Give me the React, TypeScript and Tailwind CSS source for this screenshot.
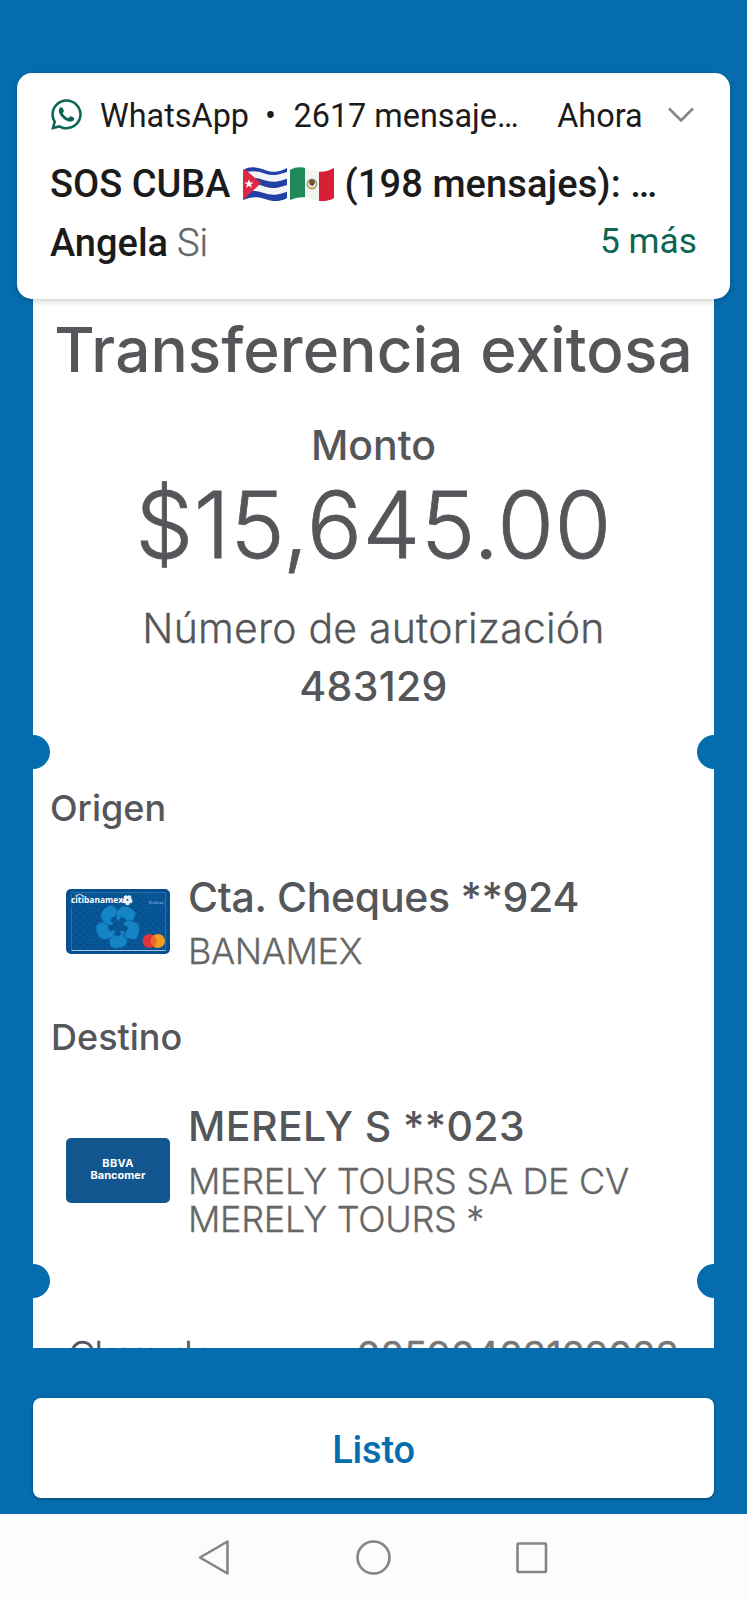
import React from 'react'
import { FaWhatsapp } from 'react-icons/fa'

const CubaFlag = () => (
  <svg width="46" height="34" viewBox="0 0 46 34">
    <clipPath id="cuba">
      <path d="M1 3C8 -1 15 0 23 3S38 5 45 1V31C38 35 31 35 23 32S8 30 1 33Z" />
    </clipPath>
    <g clipPath="url(#cuba)">
      <rect width="46" height="34" fill="#2340a4" />
      <path d="M0 10C8 6 15 7 23 10S38 11 46 8" fill="none" stroke="#f4f4f6" strokeWidth="6.5" />
      <path d="M0 23C8 19 15 20 23 23S38 24 46 21" fill="none" stroke="#f4f4f6" strokeWidth="6.5" />
      <path d="M0 0L19 16L0 34Z" fill="#dc2845" />
      <path d="M7 12L8.2 15.4H11.6L8.9 17.4L10 21L7 18.8L4 21L5.1 17.4L2.4 15.4H5.8Z" fill="#fff" />
    </g>
  </svg>
)

const MexicoFlag = () => (
  <svg width="46" height="34" viewBox="0 0 46 34">
    <clipPath id="mexico">
      <path d="M1 3C8 -1 15 0 23 3S38 5 45 1V31C38 35 31 35 23 32S8 30 1 33Z" />
    </clipPath>
    <g clipPath="url(#mexico)">
      <rect width="46" height="34" fill="#f3f3f1" />
      <rect width="16" height="34" fill="#1f8a58" />
      <rect x="30" width="16" height="34" fill="#d81f35" />
      <circle cx="23" cy="17" r="4.6" fill="none" stroke="#8aa57a" strokeWidth="1.6" />
      <path d="M20 15C21 11 26 12 26 16L24 19L21 18Z" fill="#7a4a24" />
      <path d="M19.5 20Q23 23 26.5 20" fill="none" stroke="#c79a3a" strokeWidth="1.4" />
    </g>
  </svg>
)

const Notification = () => (
  <div className="relative z-10 mx-[17px] flex h-[226px] flex-col rounded-[15px] bg-white px-[33px] text-[#1b1b1b] shadow-[0_2px_6px_rgba(0,0,0,0.2)]">
    <div className="mt-[22px] flex h-10 items-center text-[32.4px] leading-10 whitespace-nowrap">
      <FaWhatsapp className="-mt-px -ml-px h-[35px] w-[35px] text-[#0b6655]" />
      <span className="mt-px ml-[16px]">WhatsApp</span>
      <span className="mt-px ml-[16px]">•</span>
      <span className="mt-px ml-[17.5px]">2617 mensaje…</span>
      <span className="mt-px ml-[38.5px]">Ahora</span>
      <svg className="ml-[25px]" width="26" height="16" viewBox="0 0 26 16" fill="none">
        <path d="M1 1.500L13 13.500L25 1.500" stroke="#858585" strokeWidth="2.600" />
      </svg>
    </div>
    <div className="mt-[25px] flex h-12 items-center text-[38px] leading-12 font-medium whitespace-nowrap">
      <span>SOS CUBA</span>
      <span className="ml-[11px] flex gap-px">
        <CubaFlag />
        <MexicoFlag />
      </span>
      <span className="ml-[10px] tracking-[0.1px]">(198 mensajes): …</span>
    </div>
    <div className="mt-[11px] flex h-12 items-center justify-between text-[38px] leading-12">
      <div>
        <span className="font-medium">Angela</span>
        <span className="ml-[9px] font-light text-[#666] [-webkit-text-stroke:0.4px]">Si</span>
      </div>
      <span className="mb-[4px] text-[35.3px] text-[#0b6655]">5 más</span>
    </div>
  </div>
)

// Half circles cut out of both ticket edges
const Notches = () => (
  <div className="-mx-[17px] flex h-[34px] justify-between">
    <span className="h-[34px] w-[34px] rounded-full bg-[#056cae]" />
    <span className="h-[34px] w-[34px] rounded-full bg-[#056cae]" />
  </div>
)

const BanamexCard = () => (
  <svg width="104" height="65" viewBox="0 0 104 65" fontFamily="Open Sans, sans-serif">
    <defs>
      <pattern id="dots" width="7" height="7" patternUnits="userSpaceOnUse">
        <circle cx="3.5" cy="3.5" r="2.7" fill="none" stroke="#0d62a2" strokeWidth="0.8" />
      </pattern>
    </defs>
    <rect width="104" height="65" rx="5" fill="#065090" />
    <rect x="3" y="3" width="98" height="59" fill="url(#dots)" />
    <path d="M5.5 15V5M5.500 18V61.500M99.500 4V61.500M5 3.500H99" fill="none" stroke="#3f83b6" strokeWidth="0.6" />
    <path d="M5.500 61.500H99.500" stroke="#a8c8e0" strokeWidth="1" />
    <g fill="#1584c4" stroke="#07579a" strokeWidth="0.7">
      {[0, 72, 144, 216, 288].map((angle) => (
        <path
          key={angle}
          transform={`rotate(${angle} 52 37)`}
          d="M43 48Q43 45 46 45L49 46Q52 48 54 46Q56 43 53 42L57 41L61 46Q62 54 59 57Q52 61 45 58Q43 55 43 48Z"
        />
      ))}
    </g>
    <text x="5" y="13.500" fill="#fff" fontSize="9.500" fontWeight="700" textLength="52" lengthAdjust="spacingAndGlyphs">
      citibanamex
    </text>
    <path d="M9.500 6.800Q13.500 4 17.500 6.800" fill="none" stroke="#fff" strokeWidth="0.9" />
    <g fill="none" stroke="#eef6fb" strokeWidth="2">
      {[36, 108, 180, 252, 324].map((angle) => (
        <circle key={angle} cx="61.500" cy="8" r="1.200" transform={`rotate(${angle} 61.500 11)`} />
      ))}
    </g>
    <text x="83" y="14.500" fill="#c4dcee" fontSize="4" textLength="15">
      Débito
    </text>
    <circle cx="83.500" cy="52" r="7" fill="#df3340" />
    <circle cx="92" cy="52" r="7" fill="#f39a22" />
    <path d="M87.800 46.400A7 7 0 0 1 87.800 57.600A7 7 0 0 1 87.800 46.400Z" fill="#ee6a1f" />
  </svg>
)

const BancomerCard = () => (
  <div className="mt-[2px] flex h-[65px] w-[104px] flex-col items-center justify-center rounded-[5px] bg-[#12568f] pb-[2px] text-[11px] leading-3 font-bold text-white">
    <span className="tracking-[0.3px]">BBVA</span>
    <span>Bancomer</span>
  </div>
)

const NavBar = () => (
  <div className="flex h-[86px] justify-center bg-[#fcfcfc]">
    <svg width="391" height="86" viewBox="0 0 391 86" fill="none" stroke="#858585" strokeWidth="2.600" strokeLinejoin="round">
      <path d="M49.500 27.500V59.500L22 43.500Z" />
      <circle cx="195.500" cy="43.500" r="16" />
      <rect x="339.500" y="29.500" width="28.500" height="28.500" rx="1" />
    </svg>
  </div>
)

const App = () => {
  return (
    <div className="flex h-[1600px] w-[747px] flex-col overflow-hidden bg-[#056cae] pt-[73px] font-[Roboto,sans-serif]">
      <Notification />

      <div className="mx-[33px] h-[1049px] overflow-hidden bg-white font-[Inter,sans-serif] text-[#55565a]">
        <div className="flex flex-col items-center whitespace-nowrap">
          <h1 className="mt-[11px] text-[62px] leading-[80px] font-medium tracking-[0.1px]">
            Transferencia exitosa
          </h1>
          <p className="mt-[29px] text-[41px] leading-[52px] font-medium">Monto</p>
          <p className="mt-[4px] text-[92px] leading-[100px] font-light tracking-[0.4px] [-webkit-text-stroke:0.8px]">
            $15,645.00
          </p>
          <p className="mt-[25px] text-[41px] leading-[56px] font-light tracking-[0.2px] [-webkit-text-stroke:0.3px]">
            Número de autorización
          </p>
          <p className="mt-[2px] text-[41px] leading-[56px] font-medium tracking-[0.3px]">483129</p>
        </div>

        <div className="mt-[21px]">
          <Notches />
        </div>

        <div className="px-[18px]">
          <h2 className="mt-[15px] -ml-px text-[36px] leading-[48px] font-medium">Origen</h2>
          <div className="mt-[37px] flex items-center pl-[15px]">
            <div className="mb-[3px]">
              <BanamexCard />
            </div>
            <div className="ml-[18px] whitespace-nowrap">
              <p className="text-[41px] leading-[56px] font-medium tracking-[-0.3px]">Cta. Cheques **924</p>
              <p className="mt-px text-[36px] leading-[50px] font-light tracking-[-0.4px] text-[#666] [-webkit-text-stroke:0.3px]">
                BANAMEX
              </p>
            </div>
          </div>

          <h2 className="mt-[37px] text-[36px] leading-[48px] font-medium">Destino</h2>
          <div className="mt-[37px] flex items-center pl-[15px]">
            <div className="mt-[2px]">
              <BancomerCard />
            </div>
            <div className="ml-[18px] whitespace-nowrap">
              <p className="text-[41px] leading-[56px] font-medium tracking-[0.4px]">MERELY S **023</p>
              <p className="mt-[8px] text-[36px] leading-[38px] font-light tracking-[-0.3px] text-[#666] [-webkit-text-stroke:0.3px]">
                MERELY TOURS SA DE CV
                <br />
                MERELY TOURS *
              </p>
            </div>
          </div>
        </div>

        <div className="mt-[26px]">
          <Notches />
        </div>

        <div className="mt-[31px] flex justify-between pr-[35px] pl-[35px] text-[38px] leading-[52px] whitespace-nowrap">
          <span className="font-light tracking-[-1.3px] [-webkit-text-stroke:0.3px]">Clave de</span>
          <span className="text-[#777] [-webkit-text-stroke:0.4px]">08590483129023</span>
        </div>
      </div>

      <button className="mx-[33px] mt-[50px] h-[100px] rounded-lg bg-white pt-[4px] text-[38px] font-medium tracking-[-0.2px] text-[#056cae] shadow-[0_1px_3px_rgba(0,0,0,0.4)]">
        Listo
      </button>

      <div className="mt-4">
        <NavBar />
      </div>
    </div>
  )
}

export default App
